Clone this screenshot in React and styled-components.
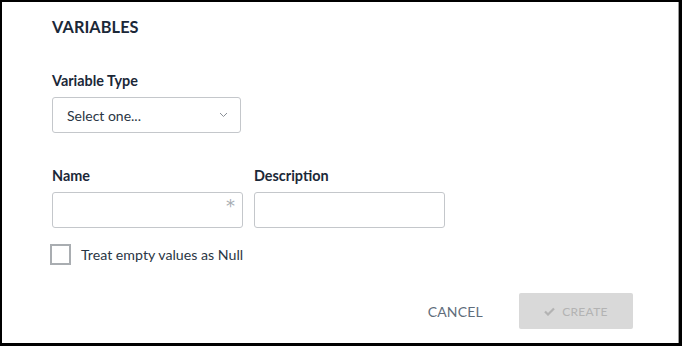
import React from "react";
import styled, { createGlobalStyle } from "styled-components";

const Global = createGlobalStyle`
  html, body {
    margin: 0;
    padding: 0;
    background: #000;
  }
  body {
    font-family: "Lato", "Liberation Sans", sans-serif;
  }
`;

const Frame = styled.div`
  width: 682px;
  height: 346px;
  box-sizing: border-box;
  border-style: solid;
  border-color: #000;
  border-width: 2px 3px 3px 2px;
  background: #000;
`;

const Dialog = styled.div`
  height: 100%;
  background: #fff;
  border-right: 1px solid #9a9a9a;
  box-sizing: border-box;
  padding: 15px 0 0 50px;
  display: flex;
  flex-direction: column;
  color: #1b2838;
`;

const Title = styled.h2`
  margin: 0;
  font-size: 16.3px;
  font-weight: 700;
  letter-spacing: 0.1px;
  line-height: 20px;
`;

const Label = styled.div`
  font-size: 14.4px;
  font-weight: 700;
  line-height: 16px;
  margin-bottom: 8px;
`;

const Section = styled.div`
  margin-top: ${(p) => p.$top}px;
`;

const Row = styled.div`
  display: flex;
  gap: 11px;
`;

const Field = styled.div`
  display: flex;
  flex-direction: column;
`;

const Box = styled.div`
  position: relative;
  width: ${(p) => p.$w}px;
  height: 36px;
  box-sizing: border-box;
  border: 1px solid #c4c7cb;
  border-radius: 3px;
  background: #fff;
  display: flex;
  align-items: center;
  padding: 0 14px;
  font-size: 14px;
  color: #2a3644;
`;

const Chevron = styled.svg`
  position: absolute;
  right: 12px;
  top: 14px;
`;

const Required = styled.span`
  position: absolute;
  right: 7px;
  top: 2px;
  font-size: 18px;
  color: #a8adb3;
  font-family: "DejaVu Sans", sans-serif;
`;

const CheckRow = styled.label`
  display: flex;
  align-items: center;
  gap: 10px;
  margin-top: 16px;
  margin-left: -2px;
  font-size: 14.2px;
  color: #2a3644;
`;

const CheckBox = styled.span`
  width: 21px;
  height: 21px;
  box-sizing: border-box;
  border: 2px solid #a9adb1;
  background: #fff;
`;

const Footer = styled.div`
  display: flex;
  justify-content: flex-end;
  align-items: center;
  gap: 36px;
  margin-top: 28px;
  padding-right: 45px;
`;

const TextButton = styled.button`
  border: none;
  background: none;
  font-family: inherit;
  font-size: 14px;
  letter-spacing: 0.2px;
  color: #5f6d7b;
  padding: 0;
`;

const PrimaryButton = styled.button`
  width: 114px;
  height: 36px;
  border: none;
  border-radius: 2px;
  background: #d9d9d9;
  color: #b3b3b3;
  font-family: inherit;
  font-size: 12px;
  letter-spacing: 0.3px;
  display: flex;
  align-items: center;
  justify-content: center;
  gap: 7px;
`;

export default function App() {
  return (
    <>
      <Global />
      <Frame>
        <Dialog>
          <Title>VARIABLES</Title>
          <Section $top={36}>
            <Label>Variable Type</Label>
            <Box $w={189}>
              Select one...
              <Chevron width="9" height="6" viewBox="0 0 9 6">
                <path d="M1 1l3.5 3.5L8 1" fill="none" stroke="#8a9097" strokeWidth="1" />
              </Chevron>
            </Box>
          </Section>
          <Section $top={35}>
            <Row>
              <Field>
                <Label>Name</Label>
                <Box $w={191}>
                  <Required>*</Required>
                </Box>
              </Field>
              <Field>
                <Label>Description</Label>
                <Box $w={191} />
              </Field>
            </Row>
          </Section>
          <CheckRow>
            <CheckBox />
            Treat empty values as Null
          </CheckRow>
          <Footer>
            <TextButton>CANCEL</TextButton>
            <PrimaryButton>
              <svg width="11" height="9" viewBox="0 0 11 9">
                <path d="M1 4.5l3 3L10 1.5" fill="none" stroke="#b3b3b3" strokeWidth="2.2" />
              </svg>
              CREATE
            </PrimaryButton>
          </Footer>
        </Dialog>
      </Frame>
    </>
  );
}
